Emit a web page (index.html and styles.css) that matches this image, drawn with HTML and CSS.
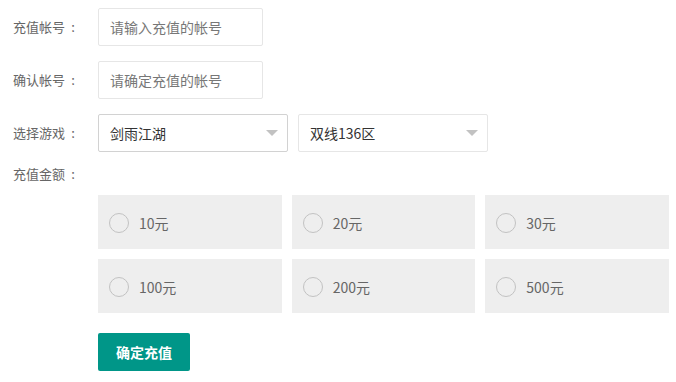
FILE: index.html
```html
<!DOCTYPE html>
<html lang="zh-CN">
<head>
  <meta charset="UTF-8" />
  <title>充值</title>
  <link rel="stylesheet" href="styles.css">
</head>
<body>
  <form class="pay-form">
    <div class="form-row">
      <label class="form-label">充值帐号<span class="colon">:</span></label>
      <input type="text" class="text-input" placeholder="请输入充值的帐号" />
    </div>
    <div class="form-row">
      <label class="form-label">确认帐号<span class="colon">:</span></label>
      <input type="text" class="text-input" placeholder="请确定充值的帐号" />
    </div>
    <div class="form-row">
      <label class="form-label">选择游戏<span class="colon">:</span></label>
      <div class="select-box">
        <span>剑雨江湖</span>
        <i class="arrow"></i>
      </div>
      <div class="select-box light">
        <span>双线136区</span>
        <i class="arrow"></i>
      </div>
    </div>
    <div class="amount-label">充值金额<span class="colon">:</span></div>
    <div class="amount-grid">
      <label class="amount-item"><i class="radio"></i>10元</label>
      <label class="amount-item"><i class="radio"></i>20元</label>
      <label class="amount-item"><i class="radio"></i>30元</label>
      <label class="amount-item"><i class="radio"></i>100元</label>
      <label class="amount-item"><i class="radio"></i>200元</label>
      <label class="amount-item"><i class="radio"></i>500元</label>
    </div>
    <button type="button" class="submit-btn">确定充值</button>
  </form>
</body>
</html>
```

FILE: styles.css
```css
* { box-sizing: border-box; }
body {
  margin: 0;
  font-family: "Microsoft YaHei", "Noto Sans CJK SC", "Noto Sans", sans-serif;
  background: #fff;
  color: #666;
}
.pay-form { padding: 8px 0 0 13px; }
.form-row { display: flex; align-items: center; gap: 10px; margin-bottom: 15px; height: 38px; }
.form-label { width: 75px; font-size: 13px; color: #666; line-height: 38px; }
.colon { display: inline-block; width: 16px; text-align: center; }
.text-input {
  width: 165px; height: 38px; padding: 0 11px;
  border: 1px solid #e6e6e6; border-radius: 2px;
  font-family: inherit; font-size: 14px; color: #333; outline: none;
}
.text-input::placeholder { color: #777; }
.select-box {
  position: relative;
  width: 190px; height: 38px; padding: 0 11px;
  border: 1px solid #d2d2d2; border-radius: 2px;
  display: flex; align-items: center;
  font-size: 14px; color: #333;
}
.select-box.light { border-color: #e6e6e6; }
.arrow {
  position: absolute; right: 9px; top: 15px;
  width: 0; height: 0;
  border-left: 6px solid transparent;
  border-right: 6px solid transparent;
  border-top: 6px solid #c2c2c2;
}
.amount-label { font-size: 13px; line-height: 14px; height: 14px; margin-bottom: 14px; }
.amount-grid {
  margin-left: 85px; width: 571px;
  display: grid; grid-template-columns: repeat(3, 1fr);
  grid-auto-rows: 54px; gap: 10px;
}
.amount-item {
  background: #eee;
  display: flex; align-items: center;
  padding: 1px 11px 0;
  font-size: 14px; color: #666;
}
.radio {
  width: 20px; height: 20px; border-radius: 50%;
  border: 1px solid #c2c2c2; margin-right: 10px;
}
.submit-btn {
  margin: 20px 0 0 85px;
  width: 92px; height: 38px;
  background: #009688; color: #fff;
  border: none; border-radius: 2px;
  font-family: inherit; font-size: 14px; font-weight: bold;
}
```
